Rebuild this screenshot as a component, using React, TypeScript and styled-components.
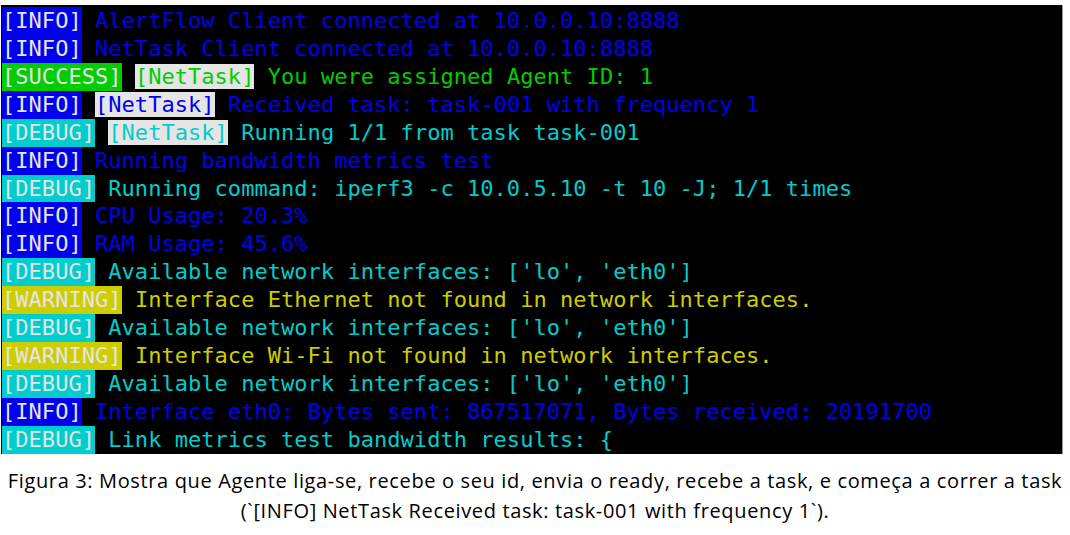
import React from "react";
import styled, { createGlobalStyle } from "styled-components";

const Global = createGlobalStyle`
  html, body { margin: 0; padding: 0; background: #ffffff; }
  body { width: 1070px; height: 535px; overflow: hidden; }
`;

const PALETTE = {
  blue: "#0000ee",
  green: "#00cd00",
  cyan: "#00cdcd",
  yellow: "#cdcd00",
  white: "#e5e5e5",
};

type Tone = "blue" | "green" | "cyan" | "yellow";

const Figure = styled.figure`
  margin: 0;
  padding: 5px 0 0 0;
  display: flex;
  flex-direction: column;
`;

const Terminal = styled.div`
  width: 1062px;
  margin-left: 1px;
  height: 449px;
  box-sizing: border-box;
  padding: 2px 0 0 1px;
  background: #000000;
  border-right: 1px solid #9a9a9a;
  overflow: hidden;
  font-family: "DejaVu Sans Mono", monospace;
  font-size: 22px;
  letter-spacing: 0.04px;
`;

const Line = styled.div<{ $tone: Tone }>`
  height: 27.93px;
  line-height: 27.93px;
  white-space: pre;
  color: ${(p) => PALETTE[p.$tone]};
`;

const Level = styled.span<{ $tone: Tone }>`
  display: inline-block;
  height: 27.93px;
  vertical-align: top;
  background: ${(p) => PALETTE[p.$tone]};
  color: ${PALETTE.white};
`;

const Tag = styled.span`
  background: ${PALETTE.white};
`;

const Caption = styled.figcaption`
  margin-top: 12px;
  font-family: "Open Sans", "Noto Sans", sans-serif;
  font-size: 20px;
  letter-spacing: 0.64px;
  line-height: 30px;
  color: #000000;
  text-align: center;
  white-space: nowrap;
`;

type Row = { level: string; tone: Tone; tag?: boolean; text: string };

const rows: Row[] = [
  { level: "[INFO]", tone: "blue", text: "AlertFlow Client connected at 10.0.0.10:8888" },
  { level: "[INFO]", tone: "blue", text: "NetTask Client connected at 10.0.0.10:8888" },
  { level: "[SUCCESS]", tone: "green", tag: true, text: "You were assigned Agent ID: 1" },
  { level: "[INFO]", tone: "blue", tag: true, text: "Received task: task-001 with frequency 1" },
  { level: "[DEBUG]", tone: "cyan", tag: true, text: "Running 1/1 from task task-001" },
  { level: "[INFO]", tone: "blue", text: "Running bandwidth metrics test" },
  { level: "[DEBUG]", tone: "cyan", text: "Running command: iperf3 -c 10.0.5.10 -t 10 -J; 1/1 times" },
  { level: "[INFO]", tone: "blue", text: "CPU Usage: 20.3%" },
  { level: "[INFO]", tone: "blue", text: "RAM Usage: 45.6%" },
  { level: "[DEBUG]", tone: "cyan", text: "Available network interfaces: ['lo', 'eth0']" },
  { level: "[WARNING]", tone: "yellow", text: "Interface Ethernet not found in network interfaces." },
  { level: "[DEBUG]", tone: "cyan", text: "Available network interfaces: ['lo', 'eth0']" },
  { level: "[WARNING]", tone: "yellow", text: "Interface Wi-Fi not found in network interfaces." },
  { level: "[DEBUG]", tone: "cyan", text: "Available network interfaces: ['lo', 'eth0']" },
  { level: "[INFO]", tone: "blue", text: "Interface eth0: Bytes sent: 867517071, Bytes received: 20191700" },
  { level: "[DEBUG]", tone: "cyan", text: "Link metrics test bandwidth results: {" },
];

export default function App() {
  return (
    <>
      <Global />
      <Figure>
        <Terminal>
          {rows.map((r, i) => (
            <Line key={i} $tone={r.tone}>
              <Level $tone={r.tone}>{r.level}</Level>
              {" "}
              {r.tag && (
                <>
                  <Tag>[NetTask]</Tag>{" "}
                </>
              )}
              {r.text}
            </Line>
          ))}
        </Terminal>
        <Caption>
          Figura 3: Mostra que Agente liga-se, recebe o seu id, envia o ready, recebe a task, e começa a correr a task
          <br />
          (`[INFO] NetTask Received task: task-001 with frequency 1`).
        </Caption>
      </Figure>
    </>
  );
}
